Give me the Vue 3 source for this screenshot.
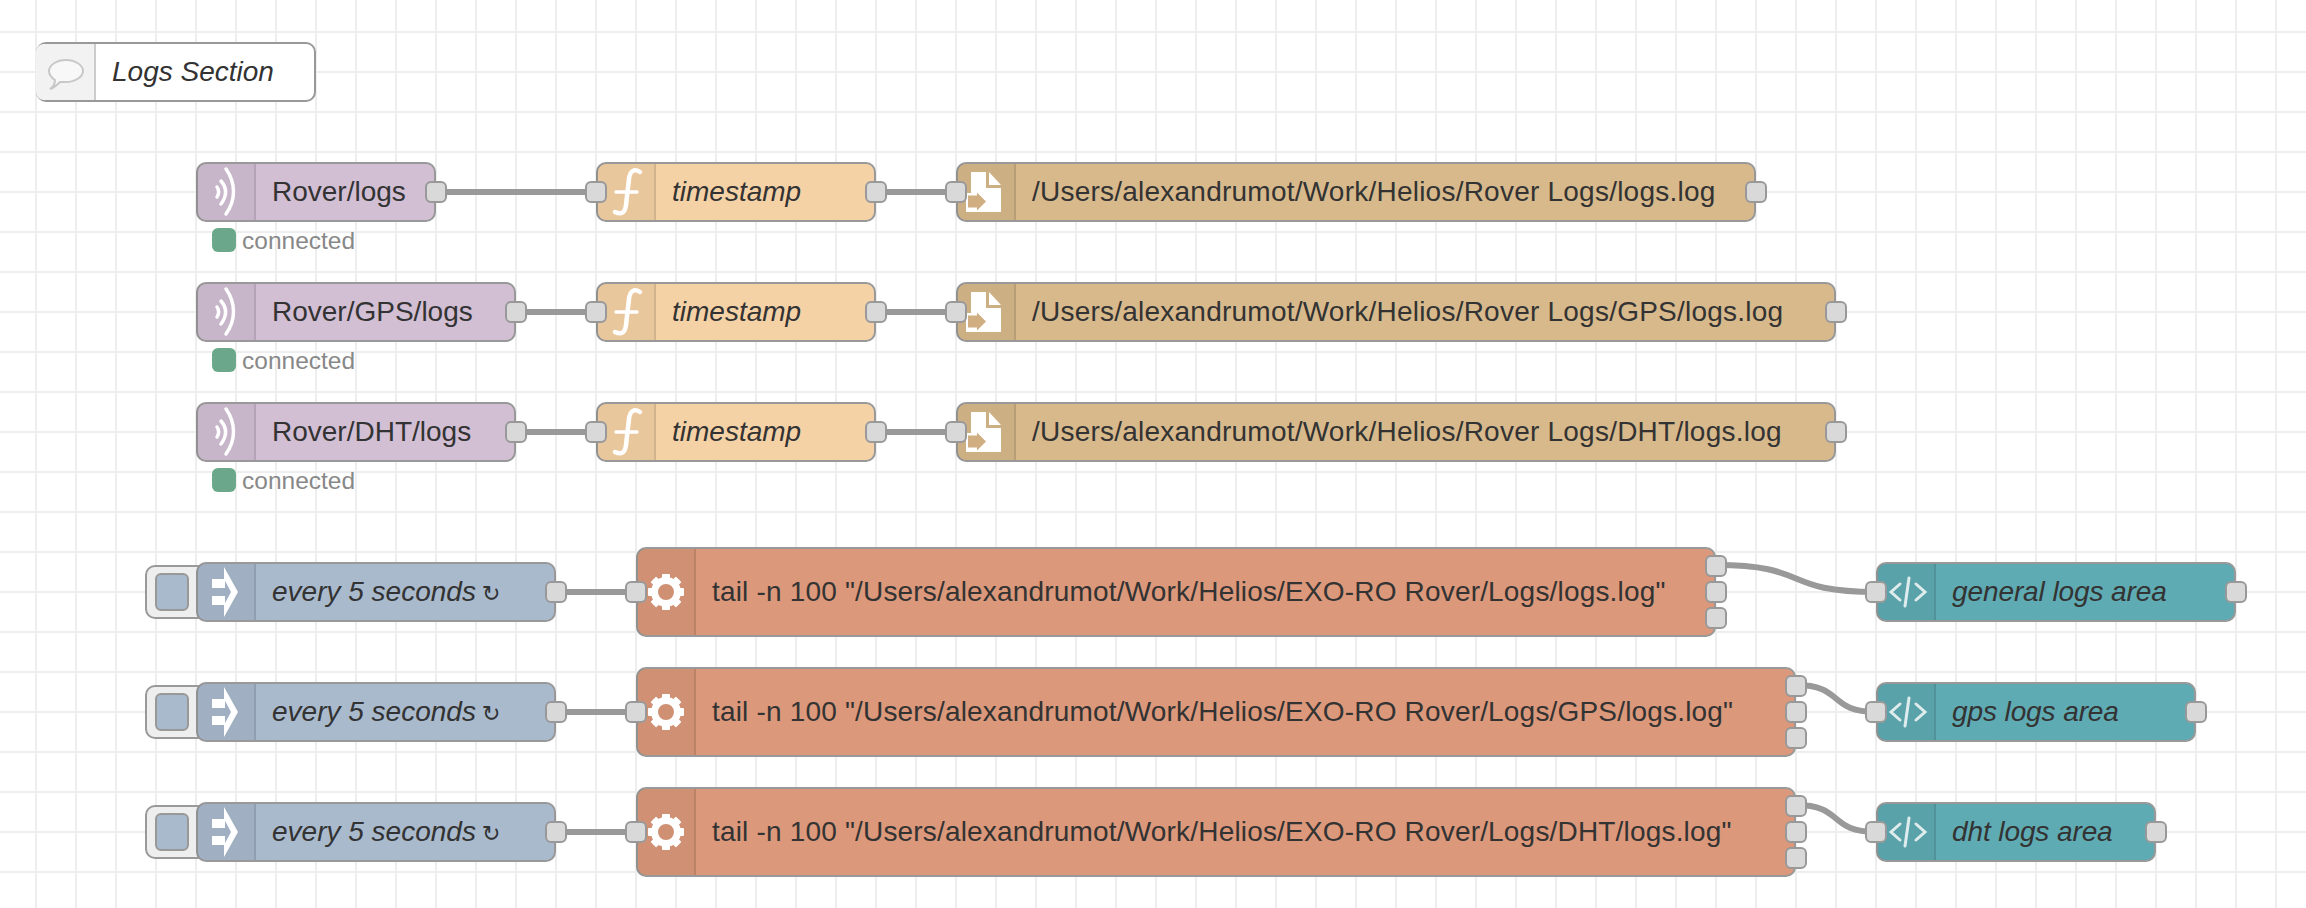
<template>
  <div class="workspace">
    <svg class="wires" width="2306" height="908">
      <path v-for="(d, i) in wires" :key="i" :d="d" />
    </svg>

    <div
      v-for="node in nodes"
      :key="node.label + node.y"
      class="node"
      :class="node.type"
      :style="{ left: node.x + 'px', top: node.y + 'px', width: node.w + 'px', height: (node.h || 60) + 'px' }"
    >
      <div v-if="node.type === 'inject'" class="inject-btn"><span></span></div>

      <div class="icon">
        <svg width="60" height="60" viewBox="0 0 60 60">
          <g v-if="node.type === 'comment'">
            <path class="bubble" d="M14 47c3-2 5-5 5-9-3-2-6-5-6-9 0-6 8-11 17-11s17 5 17 11-8 11-17 11c-2 0-4 0-6 0-3 3-6 6-10 7z" />
          </g>
          <g v-else-if="node.type === 'mqtt'" class="line">
            <path d="M30 7c10 14 10 31 0 45" stroke-width="3.5" />
            <path d="M25 19c6 7 6 15 0 23" stroke-width="3.5" />
            <path d="M21 25c2 3 2 7 0 10" stroke-width="3.5" />
          </g>
          <g v-else-if="node.type === 'func'" class="line">
            <path d="M44 10C38 6 34 9 33 17L30 43C29 51 25 53 19 50" stroke-width="4.5" />
            <path d="M20 30h21" stroke-width="3.5" />
          </g>
          <g v-else-if="node.type === 'file'">
            <path fill="#fff" d="M15 10h15v16h15v24H15z" />
            <path fill="#fff" d="M33 10l12 13H33z" />
            <path fill="#fff" d="M10 31h12v19H10z" />
            <path fill="#d0ae82" d="M12 33.5h9v-3l9 9-9 9v-3h-9z" />
          </g>
          <g v-else-if="node.type === 'inject'">
            <path fill="#fff" d="M16 17h13v9H16zM16 34h13v9H16z" />
            <path fill="#fff" d="M28 5l14 25-14 25v-12l7-13-7-13z" />
          </g>
          <g v-else-if="node.type === 'exec'">
            <circle cx="30" cy="30" r="11.5" fill="none" stroke="#fff" stroke-width="7" />
            <rect v-for="a in teeth" :key="a" x="26" y="12" width="8" height="8" rx="1" fill="#fff" :transform="`rotate(${a} 30 30)`" />
          </g>
          <g v-else-if="node.type === 'tpl'" class="line soft">
            <path d="M24 22l-9 8 9 8" stroke-width="3" />
            <path d="M33 16l-4 28" stroke-width="3" />
            <path d="M40 22l9 8-9 8" stroke-width="3" />
          </g>
        </svg>
      </div>

      <div class="label" :class="{ italic: node.italic }">{{ node.label }}<span v-if="node.type === 'inject'" class="repeat"> ↻</span></div>

      <span v-if="node.input" class="port in"></span>
      <span v-for="(p, i) in node.outputs" :key="i" class="port out" :style="{ top: p + 'px' }"></span>

      <div v-if="node.status" class="status"><i></i><span>{{ node.status }}</span></div>
    </div>
  </div>
</template>

<script setup>
const teeth = [0, 45, 90, 135, 180, 225, 270, 315]

const nodes = [
  { type: 'comment', label: 'Logs Section', x: 36, y: 42, w: 280, italic: true },

  { type: 'mqtt', label: 'Rover/logs', x: 196, y: 162, w: 240, outputs: [17], status: 'connected' },
  { type: 'func', label: 'timestamp', x: 596, y: 162, w: 280, italic: true, input: true, outputs: [17] },
  { type: 'file', label: '/Users/alexandrumot/Work/Helios/Rover Logs/logs.log', x: 956, y: 162, w: 800, input: true, outputs: [17] },

  { type: 'mqtt', label: 'Rover/GPS/logs', x: 196, y: 282, w: 320, outputs: [17], status: 'connected' },
  { type: 'func', label: 'timestamp', x: 596, y: 282, w: 280, italic: true, input: true, outputs: [17] },
  { type: 'file', label: '/Users/alexandrumot/Work/Helios/Rover Logs/GPS/logs.log', x: 956, y: 282, w: 880, input: true, outputs: [17] },

  { type: 'mqtt', label: 'Rover/DHT/logs', x: 196, y: 402, w: 320, outputs: [17], status: 'connected' },
  { type: 'func', label: 'timestamp', x: 596, y: 402, w: 280, italic: true, input: true, outputs: [17] },
  { type: 'file', label: '/Users/alexandrumot/Work/Helios/Rover Logs/DHT/logs.log', x: 956, y: 402, w: 880, input: true, outputs: [17] },

  { type: 'inject', label: 'every 5 seconds', x: 196, y: 562, w: 360, italic: true, outputs: [17] },
  { type: 'exec', label: 'tail -n 100 "/Users/alexandrumot/Work/Helios/EXO-RO Rover/Logs/logs.log"', x: 636, y: 547, w: 1080, h: 90, input: true, outputs: [6, 32, 58] },
  { type: 'tpl', label: 'general logs area', x: 1876, y: 562, w: 360, italic: true, input: true, outputs: [17] },

  { type: 'inject', label: 'every 5 seconds', x: 196, y: 682, w: 360, italic: true, outputs: [17] },
  { type: 'exec', label: 'tail -n 100 "/Users/alexandrumot/Work/Helios/EXO-RO Rover/Logs/GPS/logs.log"', x: 636, y: 667, w: 1160, h: 90, input: true, outputs: [6, 32, 58] },
  { type: 'tpl', label: 'gps logs area', x: 1876, y: 682, w: 320, italic: true, input: true, outputs: [17] },

  { type: 'inject', label: 'every 5 seconds', x: 196, y: 802, w: 360, italic: true, outputs: [17] },
  { type: 'exec', label: 'tail -n 100 "/Users/alexandrumot/Work/Helios/EXO-RO Rover/Logs/DHT/logs.log"', x: 636, y: 787, w: 1160, h: 90, input: true, outputs: [6, 32, 58] },
  { type: 'tpl', label: 'dht logs area', x: 1876, y: 802, w: 280, italic: true, input: true, outputs: [17] },
]

function curve(x1, y1, x2, y2) {
  const c = (x2 - x1) * 0.6
  return `M${x1} ${y1}C${x1 + c} ${y1} ${x2 - c} ${y2} ${x2} ${y2}`
}

const wires = [
  'M436 192H596', 'M876 192H956',
  'M516 312H596', 'M876 312H956',
  'M516 432H596', 'M876 432H956',
  'M556 592H636', 'M556 712H636', 'M556 832H636',
  curve(1716, 565, 1876, 592),
  curve(1796, 685, 1876, 712),
  curve(1796, 805, 1876, 832),
]
</script>

<style>
html, body {
  margin: 0;
  background: #fff;
}
</style>

<style scoped>
.workspace {
  position: relative;
  isolation: isolate;
  width: 2306px;
  height: 908px;
  overflow: hidden;
  background-color: #fff;
  background-image:
    linear-gradient(to right, #eee 2px, transparent 2px),
    linear-gradient(to bottom, #eee 2px, transparent 2px);
  background-size: 40px 40px;
  background-position: 35px 31px;
  font-family: "Liberation Sans", "DejaVu Sans", sans-serif;
}

.wires {
  position: absolute;
  left: 0;
  top: 0;
}

.wires path {
  fill: none;
  stroke: #999;
  stroke-width: 6;
}

.node {
  position: absolute;
  box-sizing: border-box;
  display: flex;
  align-items: center;
  border: 2px solid #999;
  border-radius: 10px;
  color: #333;
}

.icon {
  flex: none;
  position: relative;
  align-self: stretch;
  width: 56px;
  margin-left: -2px;
  padding-left: 2px;
  box-sizing: content-box;
  display: flex;
  align-items: center;
  background: rgba(0, 0, 0, 0.05);
  border-right: 2px solid rgba(0, 0, 0, 0.1);
  border-radius: 8px 0 0 8px;
}

.icon svg {
  flex: none;
  margin-left: -2px;
}

.line path {
  fill: none;
  stroke: #fff;
  stroke-linecap: round;
}

.soft path {
  stroke: rgba(255, 255, 255, 0.8);
}

.bubble {
  fill: #f8f8f8;
  stroke: #c8c8c8;
  stroke-width: 2;
}

.label {
  margin-left: 16px;
  font-size: 28px;
  line-height: 1;
  white-space: nowrap;
}

.italic {
  font-style: italic;
}

.repeat {
  font-size: 22px;
}

.port {
  position: absolute;
  box-sizing: border-box;
  width: 22px;
  height: 22px;
  background: #d9d9d9;
  border: 2px solid #999;
  border-radius: 6px;
}

.port.in {
  left: -13px;
  top: 17px;
}

.port.out {
  right: -13px;
}

.status {
  position: absolute;
  left: 14px;
  top: 63px;
  display: flex;
  align-items: center;
  gap: 6px;
  font-size: 24.5px;
  line-height: 24px;
  color: #888;
}

.status span {
  padding-top: 2px;
}

.status i {
  width: 24px;
  height: 24px;
  border-radius: 6px;
  background: #6ba88b;
}

.comment { background: #fff; }
.comment .icon { background: #f2f2f2; border-right-color: #ccc; }
.mqtt { background: #d2bfd4; }
.func { background: #f5d2a6; }
.file { background: #d8b98c; letter-spacing: 0.23px; }
.inject { background: #a9bacd; }
.exec { background: #dc987a; letter-spacing: 0.18px; }
.tpl { background: #5fabb3; letter-spacing: -0.1px; }

.exec .port.in {
  top: 32px;
}

.inject-btn {
  position: absolute;
  left: -53px;
  top: 1px;
  box-sizing: border-box;
  width: 60px;
  height: 54px;
  z-index: -1;
  background: #eee;
  border: 2px solid #999;
  border-radius: 10px 0 0 10px;
  padding: 6px 0 0 8px;
}

.inject-btn span {
  display: block;
  box-sizing: border-box;
  width: 34px;
  height: 38px;
  background: #a9bacd;
  border: 2px solid #999;
  border-radius: 6px;
}
</style>
